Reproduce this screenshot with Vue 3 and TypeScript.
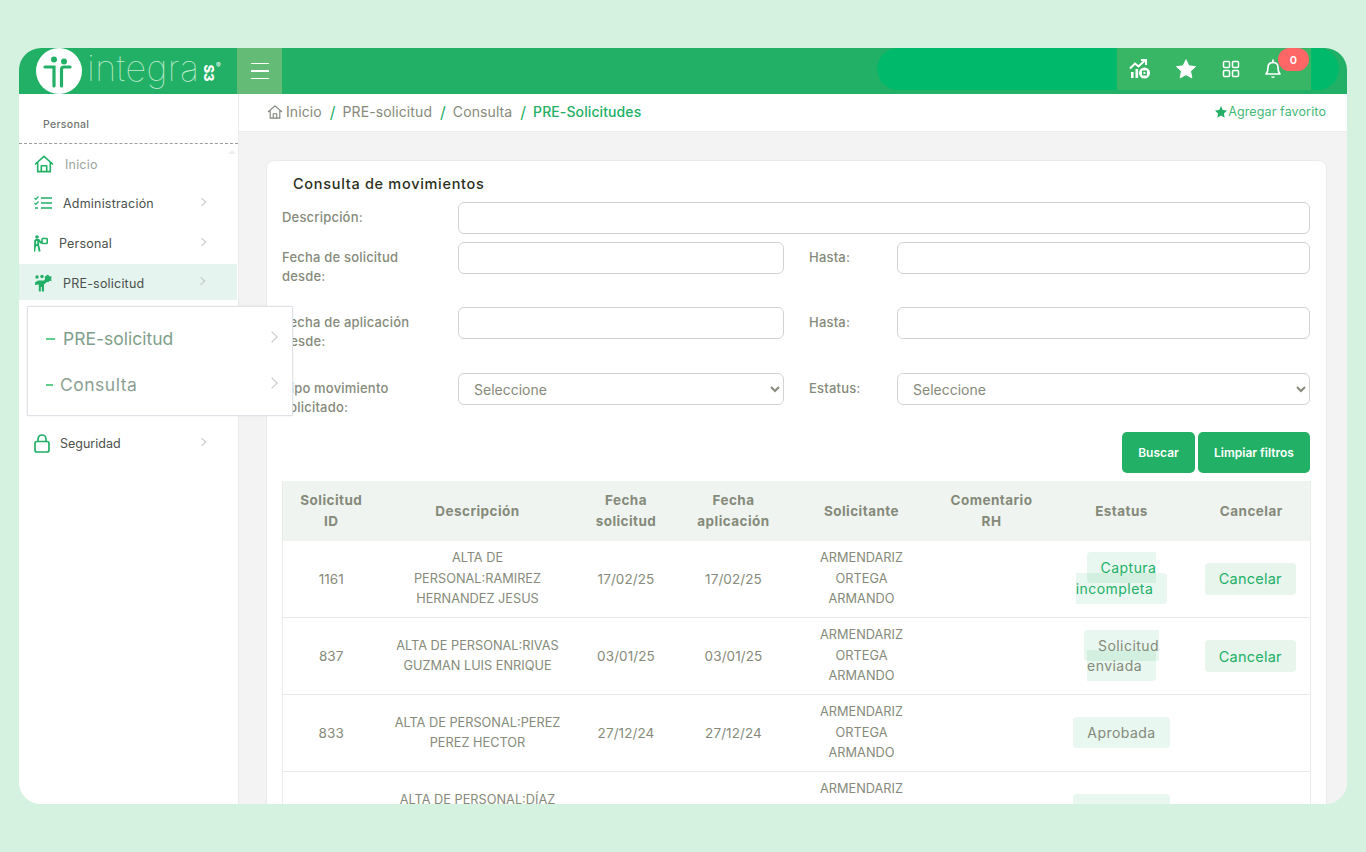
<script setup lang="ts">
interface Row {
  id: string
  desc: string[]
  fs: string
  fa: string
  status: string[]
  tone: 'green' | 'gray'
  cancel: boolean
}
const heads: string[][] = [
  ['Solicitud', 'ID'], ['Descripción'], ['Fecha', 'solicitud'], ['Fecha', 'aplicación'],
  ['Solicitante'], ['Comentario', 'RH'], ['Estatus'], ['Cancelar'],
]
const rows: Row[] = [
  { id: '1161', desc: ['ALTA DE', 'PERSONAL:RAMIREZ', 'HERNANDEZ JESUS'], fs: '17/02/25', fa: '17/02/25', status: ['Captura', 'incompleta'], tone: 'green', cancel: true },
  { id: '837', desc: ['ALTA DE PERSONAL:RIVAS', 'GUZMAN LUIS ENRIQUE'], fs: '03/01/25', fa: '03/01/25', status: ['Solicitud', 'enviada'], tone: 'gray', cancel: true },
  { id: '833', desc: ['ALTA DE PERSONAL:PEREZ', 'PEREZ HECTOR'], fs: '27/12/24', fa: '27/12/24', status: ['Aprobada'], tone: 'gray', cancel: false },
  { id: '832', desc: ['ALTA DE PERSONAL:DÍAZ', 'LOPEZ MARIO'], fs: '27/12/24', fa: '27/12/24', status: ['Aprobada'], tone: 'gray', cancel: false },
]
</script>

<template>
  <div class="window">
    <header class="topbar">
      <div class="logo">
        <svg class="logo-mark" viewBox="0 0 46 46" width="46" height="46">
          <circle cx="23" cy="23" r="23" fill="#fff" />
          <circle cx="18" cy="11.5" r="3" fill="#21b066" />
          <circle cx="28" cy="13.5" r="3" fill="#21b066" />
          <path d="M9 19H18V38" fill="none" stroke="#21b066" stroke-width="3.2" stroke-linecap="round" />
          <path d="M25.5 38V21.500Q25.500 19 28 19H34" fill="none" stroke="#21b066" stroke-width="3.2" stroke-linecap="round" />
        </svg>
        <span class="logo-word">integra</span>
        <span class="logo-s3">S3</span>
        <span class="logo-r">®</span>
      </div>
      <button class="burger" type="button" aria-label="Menú">
        <span></span><span></span><span></span>
      </button>
      <div class="pill">
        <div class="tray">
          <svg class="t-chart" viewBox="0 0 22 20" width="22" height="20">
            <path d="M1 9.500L6 4.500L9.500 7.500L15.500 1.800" fill="none" stroke="#fff" stroke-width="2" />
            <path d="M12 1H17V6" fill="none" stroke="#fff" stroke-width="2" />
            <path d="M2 13h2.600v6H2zM6.500 10h2.600v9H6.500z" fill="#fff" />
            <circle cx="15.500" cy="14" r="5.500" fill="#fff" />
            <rect x="13" y="11.500" width="5" height="5" fill="#38b565" />
            <rect x="14.500" y="13" width="2" height="2" fill="#fff" />
          </svg>
          <svg class="t-star" viewBox="0 0 24 24" width="22" height="22">
            <path d="M12 1.800l3.100 6.700 7.300.9-5.400 5 1.400 7.300L12 18.200l-6.400 3.500L7 14.400l-5.400-5 7.300-.9z" fill="#fff" stroke="#fff" stroke-linejoin="round" />
          </svg>
          <svg class="t-grid" viewBox="0 0 18 18" width="18" height="18">
            <g fill="none" stroke="#fff" stroke-width="1.500">
              <rect x="1.500" y="1.500" width="6" height="6" rx="1" />
              <rect x="10.500" y="1.500" width="6" height="6" rx="1" />
              <rect x="1.500" y="10.500" width="6" height="6" rx="1" />
              <rect x="10.500" y="10.500" width="6" height="6" rx="1" />
            </g>
          </svg>
          <svg class="t-bell" viewBox="0 0 18 20" width="18" height="20">
            <path d="M2 15c1.500-1.500 2-3 2-6.500C4 5.500 6 3.500 9 3.500s5 2 5 5c0 3.500.5 5 2 6.500z" fill="none" stroke="#fff" stroke-width="1.700" stroke-linejoin="round" />
            <path d="M9 1v2.500" stroke="#fff" stroke-width="1.700" stroke-linecap="round" />
            <path d="M6.800 17.500a2.300 2 0 0 0 4.400 0z" fill="#fff" />
          </svg>
          <span class="badge">0</span>
        </div>
      </div>
    </header>

    <div class="body">
      <aside class="sidebar">
        <div class="side-title">Personal</div>
        <span class="scroll-up"></span>
        <nav class="nav">
          <a class="nav-item n-inicio">
            <svg viewBox="0 0 22 20" width="20" height="18"><path d="M1.500 10L11 1.500 20.500 10M4 8v10.500h14V8M8 18.500V12h6v6.500" fill="none" stroke="#21b066" stroke-width="1.800" stroke-linejoin="round" stroke-linecap="round" /></svg>
            <span class="n-label muted">Inicio</span>
          </a>
          <a class="nav-item n-admin">
            <svg viewBox="0 0 18 14" width="18" height="14"><path d="M7 2h11M7 7h11M7 12h11" stroke="#21b066" stroke-width="1.400" /><path d="M.500 2l1.300 1.300L4.500.500M.500 7l1.300 1.300L4.500 5.500" fill="none" stroke="#21b066" stroke-width="1.200" /><path d="M1 12h3" stroke="#21b066" stroke-width="1.400" /></svg>
            <span class="n-label">Administración</span><i class="chev"></i>
          </a>
          <a class="nav-item n-personal">
            <svg viewBox="0 0 14 17" width="14" height="17"><circle cx="3" cy="2" r="1.800" fill="#21b066" /><path d="M1.200 5h3.500l2 2.500H8M1.200 5v5l-1 6.500M4.200 5v5l1.500 6.500M1.500 10H4" fill="none" stroke="#21b066" stroke-width="1.900" /><rect x="8" y="3.500" width="5.300" height="5" rx="1" fill="none" stroke="#21b066" stroke-width="1.600" /></svg>
            <span class="n-label">Personal</span><i class="chev"></i>
          </a>
          <a class="nav-item n-pre">
            <svg viewBox="0 0 18 18" width="18" height="18"><circle cx="3" cy="3" r="1.700" fill="#21b066" /><circle cx="8" cy="2.500" r="1.700" fill="#21b066" /><path d="M1 8.500L4 6.500h6L12.500 5l1.500 2-4 3.500V17.500H7.800V13H6.800V17.500H4.800V10.500L1 11z" fill="#21b066" /><path d="M14 .5l1.300 1.700 2.400.4-.6 2.200.6 2-2.400.3-1.300 1.400-1.600-1.400-2.100-.6.800-1.800-.5-2z" fill="#21b066" /></svg>
            <span class="n-label">PRE-solicitud</span><i class="chev"></i>
          </a>
          <div class="nav-gap"></div>
          <a class="nav-item n-seg">
            <svg viewBox="0 0 16 19" width="16" height="19"><rect x="1" y="7.500" width="14" height="10.500" rx="2" fill="none" stroke="#21b066" stroke-width="1.700" /><path d="M4 7.500V5a4 4 0 0 1 8 0v2.500" fill="none" stroke="#21b066" stroke-width="1.700" /></svg>
            <span class="n-label">Seguridad</span><i class="chev"></i>
          </a>
        </nav>
      </aside>

      <main class="main">
        <div class="crumbs">
          <svg viewBox="0 0 18 16" width="16" height="14"><path d="M1 8l8-7 8 7M3.500 6.500V15h11V6.500M7 15v-5h4v5" fill="none" stroke="#7e857b" stroke-width="1.300" stroke-linejoin="round" /></svg>
          <span class="c-link c-home">Inicio</span>
          <span class="c-sep">/</span>
          <span class="c-link">PRE-solicitud</span>
          <span class="c-sep">/</span>
          <span class="c-link">Consulta</span>
          <span class="c-sep">/</span>
          <span class="c-now">PRE-Solicitudes</span>
          <span class="fav">
            <svg viewBox="0 0 24 24" width="14" height="14"><path d="M12 1.800l3.100 6.700 7.300.9-5.400 5 1.400 7.300L12 18.200l-6.400 3.500L7 14.400l-5.400-5 7.300-.9z" fill="#21b066" /></svg>Agregar favorito
          </span>
        </div>

        <section class="card">
          <h2 class="card-title">Consulta de movimientos</h2>
          <form class="form" @submit.prevent>
            <label class="lbl">Descripción:</label>
            <input class="field span3" type="text" />

            <label class="lbl">Fecha de solicitud<br />desde:</label>
            <input class="field" type="text" />
            <label class="lbl l2">Hasta:</label>
            <input class="field" type="text" />

            <label class="lbl">Fecha de aplicación<br />desde:</label>
            <input class="field" type="text" />
            <label class="lbl l2">Hasta:</label>
            <input class="field" type="text" />

            <label class="lbl">Tipo movimiento<br />solicitado:</label>
            <select class="field sel"><option>Seleccione</option></select>
            <label class="lbl l2">Estatus:</label>
            <select class="field sel"><option>Seleccione</option></select>
          </form>

          <div class="actions">
            <button class="btn btn-a" type="button">Buscar</button>
            <button class="btn btn-b" type="button">Limpiar filtros</button>
          </div>

          <table class="table">
            <colgroup>
              <col class="c1" /><col class="c2" /><col class="c3" /><col class="c4" />
              <col class="c5" /><col class="c6" /><col class="c7" /><col class="c8" />
            </colgroup>
            <thead>
              <tr>
                <th v-for="(h, i) in heads" :key="i">
                  <span v-for="(l, j) in h" :key="j" class="ln">{{ l }}</span>
                </th>
              </tr>
            </thead>
            <tbody>
              <tr v-for="r in rows" :key="r.id">
                <td>{{ r.id }}</td>
                <td><span v-for="(l, j) in r.desc" :key="j" class="ln">{{ l }}</span></td>
                <td>{{ r.fs }}</td>
                <td>{{ r.fa }}</td>
                <td><span class="ln">ARMENDARIZ</span><span class="ln">ORTEGA</span><span class="ln">ARMANDO</span></td>
                <td></td>
                <td>
                  <span class="status" :class="r.tone"><template v-for="(l, j) in r.status" :key="j"><br v-if="j > 0" />{{ l }}</template></span>
                </td>
                <td><button v-if="r.cancel" class="cancel" type="button">Cancelar</button></td>
              </tr>
            </tbody>
          </table>
        </section>
      </main>
    </div>

    <div class="flyout">
      <div class="fly-item f1"><i class="dash"></i><span>PRE-solicitud</span><i class="chev big"></i></div>
      <div class="fly-item f2"><i class="dash short"></i><span>Consulta</span><i class="chev big"></i></div>
    </div>
  </div>
</template>

<style>
html, body { margin: 0; background: #d5f1e0; }
</style>

<style scoped>
* { box-sizing: border-box; }
.window {
  position: relative;
  width: 1328px;
  height: 756px;
  margin: 48px 0 48px 19px;
  border-radius: 22px;
  overflow: hidden;
  background: #fff;
  font-family: Inter, "Open Sans", sans-serif;
  color: #858a7a;
}
.topbar { display: flex; height: 46px; background: #21b066; }
.logo { position: relative; width: 218px; flex: none; display: flex; }
.logo-mark { margin: 0 0 0 17px; flex: none; }
.logo-word {
  margin: 0 0 0 5px;
  font: 100 36px/40px Inter, sans-serif;
  color: #c4ecd2;
  letter-spacing: 0.4px;
  white-space: nowrap;
}
.logo-s3 {
  position: absolute; left: 181px; top: 18px;
  font: 800 13px/14px Inter, sans-serif; color: #fff;
  transform: rotate(90deg);
}
.logo-r { position: absolute; left: 197px; top: 14px; font: 400 7px/8px Inter, sans-serif; color: #fff; }
.burger {
  width: 45px; flex: none; height: 46px; border: 0; padding: 0;
  background: #63bb76; display: flex; flex-direction: column; justify-content: center; align-items: center; gap: 6px;
}
.burger span { display: block; width: 18px; height: 1.5px; background: #fff; }
.pill {
  width: 462px; height: 42px; margin-left: 595px; border-radius: 21px; background: #00b96b; flex: none;
}
.tray {
  position: relative; width: 194px; height: 42px; margin-left: 240px; background: #38b565;
}
.tray svg { position: absolute; }
.t-chart { left: 12px; top: 11px; }
.t-star { left: 58px; top: 10px; }
.t-grid { left: 105px; top: 12px; }
.t-bell { left: 147px; top: 11px; }
.badge {
  position: absolute; left: 161px; top: 0; width: 31px; height: 23px; border-radius: 12px;
  background: #ff6666; color: #fff; font: 600 11px/25px Inter, sans-serif; text-align: center;
}

.body { display: flex; height: 710px; }
.sidebar { position: relative; width: 220px; flex: none; border-right: 1px solid #e9ecea; background: #fff; }
.side-title {
  height: 50px; padding: 24px 0 0 24px; font-size: 10.500px; line-height: 13px; color: #6f7570;
  border-bottom: 1px dashed #9a9f9c; font-weight: 500; letter-spacing: .3px;
}
.scroll-up {
  position: absolute; left: 209px; top: 56px; width: 0; height: 0;
  border: 4px solid transparent; border-bottom-color: #eef0ef; border-top: 0;
}
.nav { display: flex; flex-direction: column; }
.nav-item { position: relative; display: flex; align-items: center; color: #4b504c; font-size: 12.500px; padding-left: 15px; }
.nav-item svg { flex: none; }
.n-label { letter-spacing: .2px; margin-left: 11px; }
.muted { color: #9aa5a0; }
.n-inicio { height: 40px; }
.n-admin { height: 38px; }
.n-personal { height: 42px; }
.n-pre { height: 36px; width: 218px; padding-top: 2px; background: #e5f4ee; }
.nav-gap { height: 123px; }
.n-seg { height: 40px; }
.n-seg .n-label { margin-left: 10px; letter-spacing: 0; }
.chev {
  position: absolute; right: 33px; top: 50%; width: 6px; height: 6px; margin-top: -4px;
  border-top: 1px solid #c3c7c5; border-right: 1px solid #c3c7c5; transform: rotate(45deg);
}

.main { flex: 1; min-width: 0; background: #f3f3f3; overflow: hidden; }
.crumbs {
  display: flex; align-items: center; height: 38px; padding: 0 21px 2px 28px; background: #fff;
  border-bottom: 1px solid #ecedec; font-size: 14px;
}
.c-link { color: #858a7a; letter-spacing: .1px; }
.c-home { margin-left: 3px; }
.c-sep { color: #21b066; margin: 0 7px 0 8px; font-size: 16px; }
.c-now { color: #21b066; font-weight: 500; letter-spacing: .1px; }
.fav { margin-left: auto; display: flex; align-items: center; color: #3fb878; font-size: 12.500px; letter-spacing: .12px; }
.card {
  margin: 28px 20px 0 27px; padding: 0 16px 20px 15px; background: #fff;
  border: 1px solid #e9ebe9; border-radius: 8px; height: 800px;
}
.card-title { margin: 0; height: 41px; padding: 13px 0 0 11px; font-size: 14.500px; line-height: 20px; font-weight: 500; color: #2b2f20; letter-spacing: .7px; }
.form {
  display: grid; grid-template-columns: 176px 326px 113px 413px;
  grid-template-rows: 31px 56px 57px 56px; row-gap: 9px;
}
.lbl { padding-top: 6px; font-size: 13px; line-height: 19px; font-weight: 500; color: #858a7a; letter-spacing: .2px; }
.l2 { padding-left: 25px; }
.field {
  width: 100%; height: 31.500px; border: 1px solid #d0d4d0; border-radius: 6px; background: #fff;
  padding: 0 15px; font: 400 14px Inter, sans-serif; color: #858a7a; outline: none;
}
.span3 { grid-column: 2 / 5; }
.sel { padding-left: 11px; height: 32px; margin-top: 0; }
.actions { display: flex; justify-content: flex-end; gap: 3px; margin-top: 3px; }
.btn {
  height: 41px; border: 0; border-radius: 5px; background: #21b066; color: #fff;
  font: 600 12px Inter, sans-serif; padding: 0;
}
.btn-a { width: 73px; }
.btn-b { width: 112px; }
.table {
  width: 1028px; margin-top: 8px; border-collapse: collapse; table-layout: fixed;
  border-left: 1px solid #eaecea; border-right: 1px solid #eaecea;
}
.c1 { width: 97px; }
.c2 { width: 196px; }
.c3 { width: 101px; }
.c4 { width: 114px; }
.c5 { width: 142px; }
.c6 { width: 118px; }
.c7 { width: 142px; }
.c8 { width: 118px; }
.ln { display: block; }
th {
  height: 60px; padding: 0; background: #f0f4f1; font-size: 13.500px; line-height: 21px; font-weight: 700; color: #858a7a; text-align: center; letter-spacing: .45px;
}
td {
  height: 77px; padding: 1px 0 0; text-align: center; font-size: 13.500px; line-height: 20.500px; color: #858a7a;
  border-bottom: 1px solid #e9ebe9; vertical-align: middle; letter-spacing: .1px;
}
tbody tr:first-child td { height: 76px; padding-top: 0; }
td .ln { font-size: 12.750px; letter-spacing: 0; }
.status { padding: 7px 14px; border-radius: 4px; background: rgba(33, 176, 102, .1); font-size: 14px; line-height: 20.500px; letter-spacing: .45px; }
.status.green { color: #21b066; }
.status.gray { color: #858a7a; }
.cancel {
  width: 91px; height: 32px; margin-right: 2px; border: 0; border-radius: 4px; background: #e8f5ec; color: #21b066;
  font: 400 14.500px Inter, sans-serif; padding: 0; letter-spacing: .25px;
}

.flyout {
  position: absolute; left: 8px; top: 258px; width: 266px; height: 110px; background: #fff;
  border: 1px solid #dfe2e6; box-shadow: 0 0 2px rgba(0, 0, 0, .08); z-index: 5;
}
.fly-item { position: relative; display: flex; align-items: center; height: 47px; font-size: 17.500px; }
.fly-item.f1 { margin-top: 8px; color: #7fa08c; }
.fly-item.f2 { color: #8b9f93; margin-top: -1px; letter-spacing: .5px; }
.dash { width: 9px; height: 2px; margin: 0 8px 0 18px; background: #5fd08c; flex: none; }
.dash.short { width: 7px; margin-right: 7px; }
.chev.big { right: 16px; width: 8px; height: 8px; margin-top: -6px; }
</style>
